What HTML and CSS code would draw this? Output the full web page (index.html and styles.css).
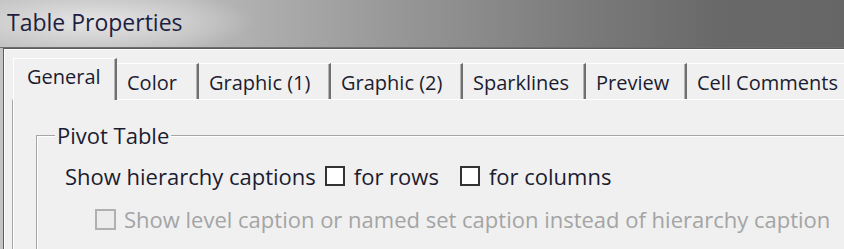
FILE: index.html
```html
<!DOCTYPE html>
<html>
<head>
  <title>Table Properties</title>
  <link rel="stylesheet" href="styles.css">
</head>
<body>

  <div class="titlebar">Table Properties</div>

  <div class="window">
    <div class="tabs">
      <div class="tab active">General</div>
      <div class="tab w-color">Color</div>
      <div class="tab w-graphic">Graphic (1)</div>
      <div class="tab w-graphic">Graphic (2)</div>
      <div class="tab w-spark">Sparklines</div>
      <div class="tab w-preview">Preview</div>
      <div class="tab w-comments">Cell Comments</div>
    </div>

    <div class="page">
      <fieldset class="group">
        <legend>Pivot Table</legend>
        <div class="row">
          <span>Show hierarchy captions</span>
          <span class="check"></span>
          <span>for rows</span>
          <span class="check spaced"></span>
          <span>for columns</span>
        </div>
        <div class="row sub disabled">
          <span class="check"></span>
          <span>Show level caption or named set caption instead of hierarchy caption</span>
        </div>
      </fieldset>
    </div>
  </div>

</body>
</html>
```

FILE: styles.css
```css
body {
  margin: 0;
  width: 844px;
  height: 249px;
  overflow: hidden;
  background: #c4c4c4;
  font-family: 'Open Sans', 'Noto Sans', sans-serif;
  color: #1c1c30;
}

.titlebar {
  height: 48px;
  box-sizing: border-box;
  padding: 6px 0 0 7px;
  font-size: 23px;
  color: #1e1e40;
  border-bottom: 1px solid #6e6e6e;
  background:
    radial-gradient(ellipse 160px 34px at 95px 22px, rgba(232,232,232,0.95), rgba(232,232,232,0)),
    linear-gradient(to right, #c0c0c0 0, #bababa 22%, #9a9a9a 45%, #7c7c7c 68%, #696969 85%, #666 100%);
}

.window {
  margin-left: 3px;
  height: 201px;
  box-sizing: border-box;
  border-top: 1px solid #5c5c5c;
  border-left: 1px solid #5c5c5c;
  box-shadow: inset 1px 1px 0 #fff;
  background: #f0f0f0;
  padding: 9px 0 0 9px;
}

.tabs {
  display: flex;
  align-items: flex-end;
  height: 41px;
  white-space: nowrap;
  font-size: 20px;
}

.tab {
  flex: none;
  box-sizing: border-box;
  height: 36px;
  padding: 5px 0 0 10px;
  background: #f0f0f0;
  border-top: 1px solid #fff;
  border-right: 2px solid #707070;
  box-shadow: inset -1px 0 0 #b4b4b4;
}

.tab.active {
  position: relative;
  z-index: 1;
  width: 104px;
  height: 42px;
  margin-bottom: -1px;
  padding: 4px 0 0 13px;
  border-left: 1px solid #fff;
}

.w-color { width: 82px; }
.w-graphic { width: 132px; }
.w-spark { width: 123px; }
.w-preview { width: 101px; }
.w-comments { width: 170px; }

.page {
  margin-left: -1px;
  height: 140px;
  border-top: 1px solid #fff;
  border-left: 1px solid #a8a8a8;
  box-shadow: inset 1px 0 0 #fff;
  padding: 20px 0 0 23px;
}

.group {
  margin: 0;
  padding: 0;
  height: 130px;
  border: none;
  border-top: 1px solid #a5a5a5;
  border-left: 1px solid #a5a5a5;
  box-shadow: inset 1px 1px 0 #fff;
  font-size: 22px;
}

.group legend {
  margin-left: 18px;
  padding: 0 2px;
  background: #f0f0f0;
}

.row {
  display: flex;
  align-items: center;
  gap: 9px;
  height: 28px;
  margin: 12px 0 0 28px;
  white-space: nowrap;
}

.row.sub {
  margin-top: 15px;
  margin-left: 58px;
  gap: 8px;
}

.check {
  flex: none;
  width: 20px;
  height: 20px;
  box-sizing: border-box;
  border: 2px solid #333;
  background: #fff;
}

.check.spaced {
  margin-left: 12px;
}

.disabled {
  color: #a4a4a4;
}

.disabled .check {
  width: 21px;
  height: 21px;
  border-color: #b0b0b0;
  background: #ececec;
}
```
